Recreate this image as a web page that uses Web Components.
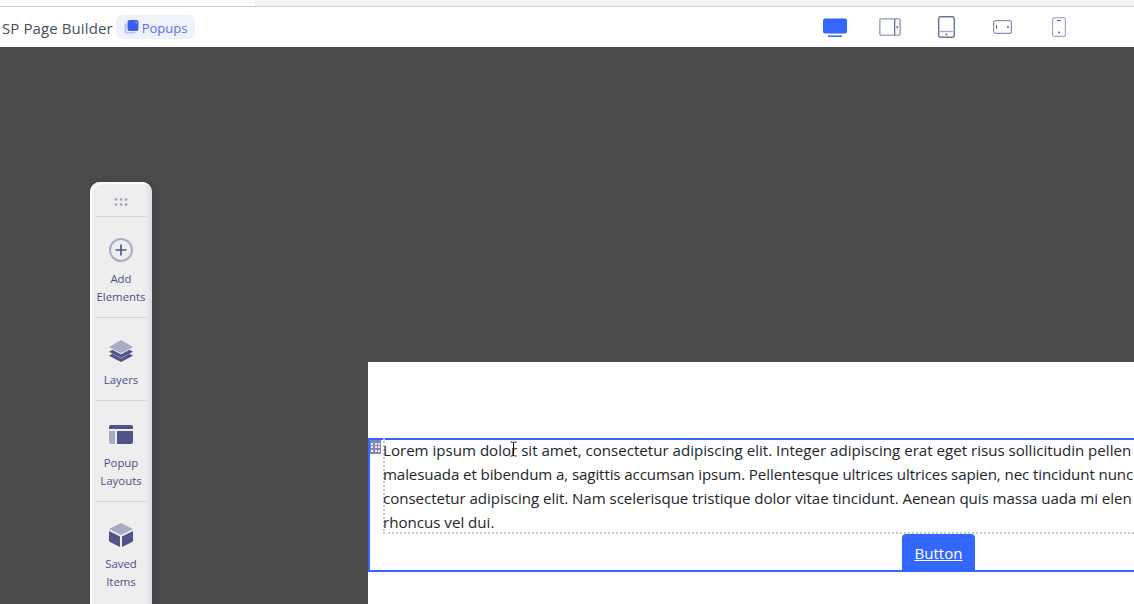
<!DOCTYPE html>
<html><head><meta charset="utf-8"><style>
html,body{margin:0;padding:0;height:100%;overflow:hidden;background:#4b4b4b}
body{font-family:"Open Sans","Noto Sans",sans-serif;display:flex;flex-direction:column;width:1134px;height:604px}
</style></head><body>
<app-topbar></app-topbar>
<app-canvas>
  <app-toolbar slot="toolbar">
    <tool-item label="Add Elements" h="101"><svg viewBox="0 0 24 24" width="24" height="24"><circle cx="12" cy="12" r="11" fill="none" stroke="#a9abc6" stroke-width="2"/><path d="M12 6.500v11M6.500 12h11" stroke="#4f5389" stroke-width="1.700" fill="none"/></svg></tool-item>
    <tool-item label="Layers" h="83"><svg viewBox="0 0 24 22" width="24" height="22"><path d="M12 0 24 7 12 13.500 0 7Z" fill="#a9abc6"/><path d="M3.500 9.800 0 11.700l12 6.300 12-6.300-3.500-1.900L12 14.500Z" fill="#4f5389"/><path d="M3.500 13.800 0 15.700 12 22l12-6.300-3.500-1.900L12 18.500Z" fill="#4f5389"/></svg></tool-item>
    <tool-item label="Popup Layouts" h="101"><svg viewBox="0 0 24 19" width="24" height="19"><path d="M2 0h20a2 2 0 0 1 2 2v2H0V2a2 2 0 0 1 2-2Z" fill="#4f5389"/><path d="M0 6h6v13H2a2 2 0 0 1-2-2Z" fill="#a9abc6"/><path d="M8 6h16v11a2 2 0 0 1-2 2H8Z" fill="#4f5389"/></svg></tool-item>
    <tool-item label="Saved Items" h="101"><svg viewBox="0 0 24 24" width="24" height="24"><path d="M12 0 24 6 12 12 0 6Z" fill="#a9abc6"/><path d="M0 8 11 13.500V24L1 19a2 2 0 0 1-1-1.700Z" fill="#4f5389"/><path d="M24 8 13 13.500V24l10-5a2 2 0 0 0 1-1.700Z" fill="#4f5389"/></svg></tool-item>
  </app-toolbar>
  <popup-stage slot="stage">
    <text-block>
      <div>Lorem ipsum dolor sit amet, consectetur adipiscing elit. Integer adipiscing erat eget risus sollicitudin pellen</div>
      <div style="letter-spacing:-.1px">malesuada et bibendum a, sagittis accumsan ipsum. Pellentesque ultrices ultrices sapien, nec tincidunt nunc</div>
      <div style="letter-spacing:-.05px">consectetur adipiscing elit. Nam scelerisque tristique dolor vitae tincidunt. Aenean quis massa uada mi elen</div>
      <div>rhoncus vel dui.</div>
    </text-block>
    <a-button>Button</a-button>
  </popup-stage>
</app-canvas>
<script>
function def(name,html){customElements.define(name,class extends HTMLElement{constructor(){super();this.attachShadow({mode:'open'}).innerHTML=html;}});}

def('app-topbar',`<style>
:host{display:block;flex:none;background:#fff}
.strip{height:6px;background:linear-gradient(90deg,#fff 0 255px,#f4f4f4 255px)}
.line{height:1px;background:#cfcfcf}
.bar{height:40px;display:flex;align-items:center;padding-left:2px;position:relative}
.t{font-size:15px;color:#4a4d5e;letter-spacing:.1px;margin-right:3px;padding-top:2px}
.pill{display:flex;align-items:center;gap:3px;height:24px;padding:0 8px 0 8px;border-radius:6px;background:#eff2fb;color:#5a70ee;font-size:13px}
.pill span{padding-top:1px}
.dev{position:absolute;left:0;top:0;bottom:0;width:100%;display:flex;align-items:center;padding-left:823px;box-sizing:border-box}
.d{width:24px;display:flex;justify-content:center;margin-right:32px}
.s{position:relative;left:-1px}
</style>
<div class="strip"></div><div class="line"></div>
<div class="bar"><span class="t">SP Page Builder</span>
<span class="pill"><svg width="15" height="15" viewBox="0 0 15 15"><path d="M.5 3.500h2v7.500a1 1 0 0 0 1 1h8v1.500H2A1.500 1.500 0 0 1 .5 12Z" fill="#b4c1f4"/><rect x="3.500" y="0" width="11" height="11" rx="2" fill="#3e5ce8"/><path d="M9.500 1.500h2.500a1 1 0 0 1 1 1v2.500A3.500 3.500 0 0 0 9.500 1.500Z" fill="#b4c1f4"/></svg><span>Popups</span></span>
<div class="dev">
<span class="d"><svg width="24" height="19" viewBox="0 0 24 19"><rect y=".5" width="24" height="15" rx="2" fill="#3366ff"/><rect x="5" y="17.500" width="14" height="1.500" fill="#3366ff"/></svg></span>
<span class="d"><svg class="s" width="22" height="18" viewBox="0 0 22 18"><rect x=".8" y=".8" width="20.400" height="16.400" rx="2" fill="none" stroke="#a4aac8" stroke-width="1.600"/><path d="M15.700 1v16" stroke="#5a648f" stroke-width="1.200"/><circle cx="18.300" cy="9" r="1" fill="#5a648f"/></svg></span>
<span class="d"><svg class="s" width="17" height="22" viewBox="0 0 17 22"><rect x=".7" y=".7" width="15.600" height="20.600" rx="2" fill="none" stroke="#6a7399" stroke-width="1.400"/><path d="M2 15.500h13" stroke="#a4aac8" stroke-width="1.400"/><circle cx="8.500" cy="18.500" r="1" fill="#5a648f"/></svg></span>
<span class="d"><svg class="s" width="19" height="14" viewBox="0 0 19 14"><rect x=".6" y=".6" width="17.800" height="12.800" rx="2" fill="none" stroke="#8a92b4" stroke-width="1.200"/><path d="M3.500 5v4" stroke="#5a648f" stroke-width="1"/><circle cx="15" cy="7" r="1" fill="#5a648f"/></svg></span>
<span class="d"><svg width="14" height="20" viewBox="0 0 14 20"><rect x=".6" y=".6" width="12.800" height="18.800" rx="2" fill="none" stroke="#a4aac8" stroke-width="1.200"/><path d="M5 3.500h4" stroke="#5a648f" stroke-width="1"/><circle cx="7" cy="15.500" r="1" fill="#5a648f"/></svg></span>
</div></div>`);

def('app-canvas',`<style>
:host{display:block;flex:1;position:relative;overflow:hidden;background:#4b4b4b}
::slotted([slot=toolbar]){position:absolute;left:90px;top:135px}
::slotted([slot=stage]){position:absolute;left:368px;top:315px;right:0;bottom:0}
</style><slot name="toolbar"></slot><slot name="stage"></slot>`);

def('app-toolbar',`<style>
:host{display:block;width:62px;background:#eeeeee;border-radius:10px 10px 0 0;box-shadow:inset 2px 2px 2px #fff,inset -5px 0 4px -2px #d9dcec,3px 0 6px rgba(0,0,0,.12);height:440px}
.grip{height:34px;display:flex;align-items:center;justify-content:center;box-sizing:border-box;padding-top:6px}
</style>
<div class="grip"><svg width="14" height="8" viewBox="0 0 14 8" fill="#9a9cbc"><circle cx="2" cy="1.500" r="1.300"/><circle cx="7" cy="1.500" r="1.300"/><circle cx="12" cy="1.500" r="1.300"/><circle cx="2" cy="6.500" r="1.300"/><circle cx="7" cy="6.500" r="1.300"/><circle cx="12" cy="6.500" r="1.300"/></svg></div>
<slot></slot>`);

customElements.define('tool-item',class extends HTMLElement{constructor(){super();const s=this.attachShadow({mode:'open'});
const h=this.getAttribute('h');
s.innerHTML=`<style>
:host{display:block;position:relative;height:${h}px;box-sizing:border-box;border-top:1px solid #d6d4e2;margin:0 5px;text-align:center;padding-top:19px}
.i{height:28px;display:flex;align-items:center;justify-content:center;margin-bottom:6px}
.l{font-size:11.400px;line-height:18px;color:#4a4f86;margin:0 -5px;padding:0 4px}
</style><div class="i"><slot></slot></div><div class="l">${this.getAttribute('label')}</div>`;}});

def('popup-stage',`<style>
:host{display:block;background:#fff;padding-top:76px;overflow:hidden}
.sel{height:134px;box-sizing:border-box;border:2px solid #3366ff;border-right:0;position:relative;padding:0 0 0 13px}
.h{position:absolute;left:0;top:0;width:11px;height:14px;background:#8487b5;display:grid;grid-template-columns:repeat(3,2px);grid-auto-rows:2px;gap:1.500px;align-content:center;justify-content:center}
.h i{background:#eee;display:block}
.cur{position:absolute;left:139px;top:1px}
</style>
<div class="sel"><div class="h"><i></i><i></i><i></i><i></i><i></i><i></i><i></i><i></i><i></i></div>
<slot></slot>
<svg class="cur" width="9" height="16" viewBox="0 0 9 16"><path d="M1.500 1h2l1 1 1-1h2M4.500 2v12M1.500 15h2l1-1 1 1h2" fill="none" stroke="#111" stroke-width="1"/></svg></div>`);

def('text-block',`<style>
:host{display:block;border-left:2px dotted #c9c7d6;border-bottom:2px dotted #c9c7d6;box-sizing:content-box;
font-size:15.100px;line-height:24px;color:#212529;white-space:nowrap;text-indent:-2px;margin-top:-2px;height:94px}
</style><slot></slot>`);

def('a-button',`<style>
:host{display:block;position:absolute;left:532px;bottom:-2px;width:73px;height:38px;box-sizing:border-box;background:#3366ff;border-radius:4px 4px 0 0;color:#fff;text-decoration:underline;font-size:15.100px;line-height:39px;text-align:center}
</style><slot></slot>`);
</script>
</body></html>
